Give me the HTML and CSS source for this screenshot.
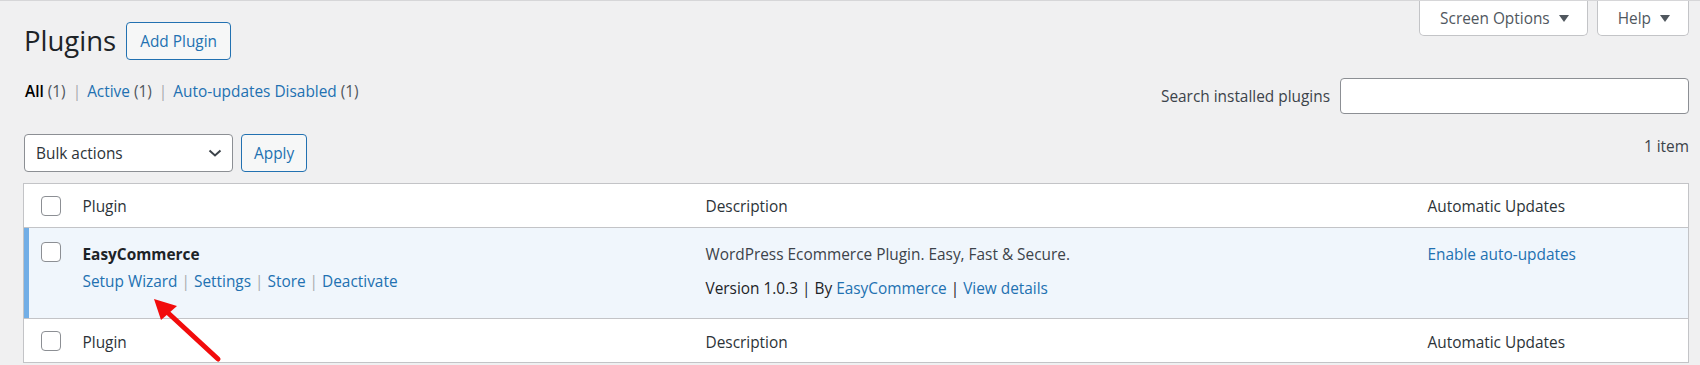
FILE: index.html
```html
<!DOCTYPE html>
<html lang="en">

<head>
  <meta charset="UTF-8">
  <title>Plugins</title>
  <link rel="stylesheet" href="styles.css">
</head>

<body>
  <div id="screenMetaLinks">
    <button class="meta-tab">Screen Options <span class="caret"></span></button>
    <button class="meta-tab">Help <span class="caret"></span></button>
  </div>

  <div class="wrap">
    <div class="title-row">
      <h1>Plugins</h1>
      <a href="#" class="page-title-action">Add Plugin</a>
    </div>

    <div class="filter-row">
      <ul class="subsubsub">
        <li><a href="#" class="current">All <span class="count">(1)</span></a> |</li>
        <li><a href="#">Active <span class="count">(1)</span></a> |</li>
        <li><a href="#">Auto-updates Disabled <span class="count">(1)</span></a></li>
      </ul>
      <div class="search-box">
        <label for="pluginSearch">Search installed plugins</label>
        <input type="search" id="pluginSearch">
      </div>
    </div>

    <div class="tablenav">
      <div class="bulk">
        <div class="select">
          <span>Bulk actions</span>
          <svg width="14" height="8" viewBox="0 0 14 8"><path d="M1.5 1.5 L7 6.5 L12.5 1.5" fill="none" stroke="#3c434a" stroke-width="2" /></svg>
        </div>
        <button class="button">Apply</button>
      </div>
      <span class="num-items">1 item</span>
    </div>

    <div class="table-holder">
      <table class="plugins">
        <thead>
          <tr>
            <th class="check-column"><span class="cb"></span></th>
            <th class="col-name">Plugin</th>
            <th class="col-desc">Description</th>
            <th class="col-auto">Automatic Updates</th>
          </tr>
        </thead>
        <tbody>
          <tr class="active">
            <th class="check-column"><span class="cb"></span></th>
            <td class="plugin-title">
              <strong>EasyCommerce</strong>
              <div class="row-actions">
                <a href="#">Setup Wizard</a> | <a href="#">Settings</a> | <a href="#">Store</a> | <a href="#">Deactivate</a>
              </div>
            </td>
            <td class="desc">
              <p>WordPress Ecommerce Plugin. Easy, Fast &amp; Secure.</p>
              <p class="meta">Version 1.0.3 | By <a href="#">EasyCommerce</a> | <a href="#">View details</a></p>
            </td>
            <td class="auto"><a href="#">Enable auto-updates</a></td>
          </tr>
        </tbody>
        <tfoot>
          <tr>
            <th class="check-column"><span class="cb"></span></th>
            <th class="col-name">Plugin</th>
            <th class="col-desc">Description</th>
            <th class="col-auto">Automatic Updates</th>
          </tr>
        </tfoot>
      </table>

      <!-- annotation arrow pointing at Setup Wizard -->
      <svg class="arrow" width="80" height="76" viewBox="0 0 80 76">
        <path d="M70 70 L18 22" stroke="#f20c0c" stroke-width="5" stroke-linecap="round" fill="none" />
        <polygon points="6,10 29,17 13,31" fill="#f20c0c" />
      </svg>
    </div>
  </div>
</body>

</html>
```

FILE: styles.css
```css
* {
  box-sizing: border-box;
}

body {
  margin: 0;
  background: #f0f0f1;
  border-top: 1px solid #d6d6d8;
  font-family: 'Open Sans', sans-serif;
  font-size: 15.4px;
  color: #3c434a;
  min-height: 364px;
}

a {
  color: #2271b1;
  text-decoration: none;
}

/* Screen options / help tabs */
#screenMetaLinks {
  float: right;
  display: flex;
  gap: 9px;
  margin-right: 11px;
}

.meta-tab {
  height: 35px;
  padding: 0 18px 0 20px;
  background: #fff;
  border: 1px solid #c3c4c7;
  border-top: none;
  border-radius: 0 0 5px 5px;
  font: inherit;
  color: #50575e;
  display: flex;
  align-items: center;
  gap: 9px;
}

.caret {
  width: 0;
  height: 0;
  border-left: 5px solid transparent;
  border-right: 5px solid transparent;
  border-top: 7px solid #50575e;
}

.wrap {
  padding: 0 11px 0 23px;
}

.title-row {
  display: flex;
  align-items: center;
  gap: 10px;
  padding-top: 21px;
}

h1 {
  margin: 0;
  font-size: 27.5px;
  font-weight: 400;
  color: #1d2327;
  line-height: 1.3;
  padding-left: 1px;
}

.page-title-action,
.button {
  display: inline-flex;
  align-items: center;
  height: 38px;
  padding: 0 12px;
  border: 1px solid #2271b1;
  border-radius: 4px;
  background: #f6f7f7;
  color: #2271b1;
  font: inherit;
}

.page-title-action {
  padding: 0 13px;
}

.filter-row {
  display: flex;
  justify-content: space-between;
  align-items: flex-start;
  margin-top: 18px;
}

.subsubsub {
  list-style: none;
  margin: 0;
  padding: 3px 0 0 2px;
  display: flex;
  gap: 6px;
  color: #a7aaad;
}

.subsubsub li {
  display: flex;
  gap: 7px;
}

.subsubsub .current {
  color: #000;
  font-weight: 600;
}

.count {
  color: #50575e;
  font-weight: 400;
}

.search-box {
  display: flex;
  align-items: center;
  gap: 10px;
}

.search-box input {
  width: 349px;
  height: 36px;
  border: 1px solid #8c8f94;
  border-radius: 4px;
  background: #fff;
}

.tablenav {
  display: flex;
  justify-content: space-between;
  align-items: flex-start;
  margin-top: 20px;
  height: 49px;
}

.bulk {
  display: flex;
  gap: 8px;
  padding-left: 1px;
}

.select {
  width: 209px;
  height: 38px;
  border: 1px solid #8c8f94;
  border-radius: 4px;
  background: #fff;
  display: flex;
  align-items: center;
  justify-content: space-between;
  padding: 0 10px 0 11px;
  color: #2c3338;
}

.num-items {
  padding-top: 2px;
  color: #3c434a;
}

.table-holder {
  position: relative;
}

.plugins {
  width: 100%;
  border-collapse: collapse;
  border: 1px solid #c3c4c7;
  background: #fff;
  table-layout: fixed;
}

.plugins th,
.plugins td {
  text-align: left;
  font-weight: 400;
  vertical-align: top;
}

thead th,
tfoot th {
  height: 44px;
  vertical-align: middle !important;
  color: #2c3338;
  padding: 0 12px;
}

thead th {
  padding-top: 2px;
}

thead tr {
  border-bottom: 1px solid #c3c4c7;
}

tfoot tr {
  border-top: 1px solid #c3c4c7;
}

tfoot th {
  padding-top: 3px;
}

.check-column {
  width: 47px;
  padding: 0 0 0 17px !important;
}

.col-name {
  width: 623px;
}

.col-desc {
  width: 722px;
}

.cb {
  display: block;
  width: 20px;
  height: 20px;
  border: 1px solid #8c8f94;
  border-radius: 4px;
  background: #fff;
}

tbody tr.active {
  background: #f0f6fc;
  height: 91px;
}

tbody tr.active th.check-column {
  box-shadow: inset 5px 0 0 #72aee6;
  padding-top: 14px !important;
}

tbody td {
  padding: 16px 12px 0;
}

.plugin-title strong {
  color: #1d2327;
  font-weight: 700;
}

.row-actions {
  margin-top: 6px;
  color: #a7aaad;
}

.desc p {
  margin: 0;
  color: #3c434a;
}

.desc .meta {
  margin-top: 13px;
  color: #1d2327;
}

.arrow {
  position: absolute;
  left: 125px;
  top: 106px;
}
```
